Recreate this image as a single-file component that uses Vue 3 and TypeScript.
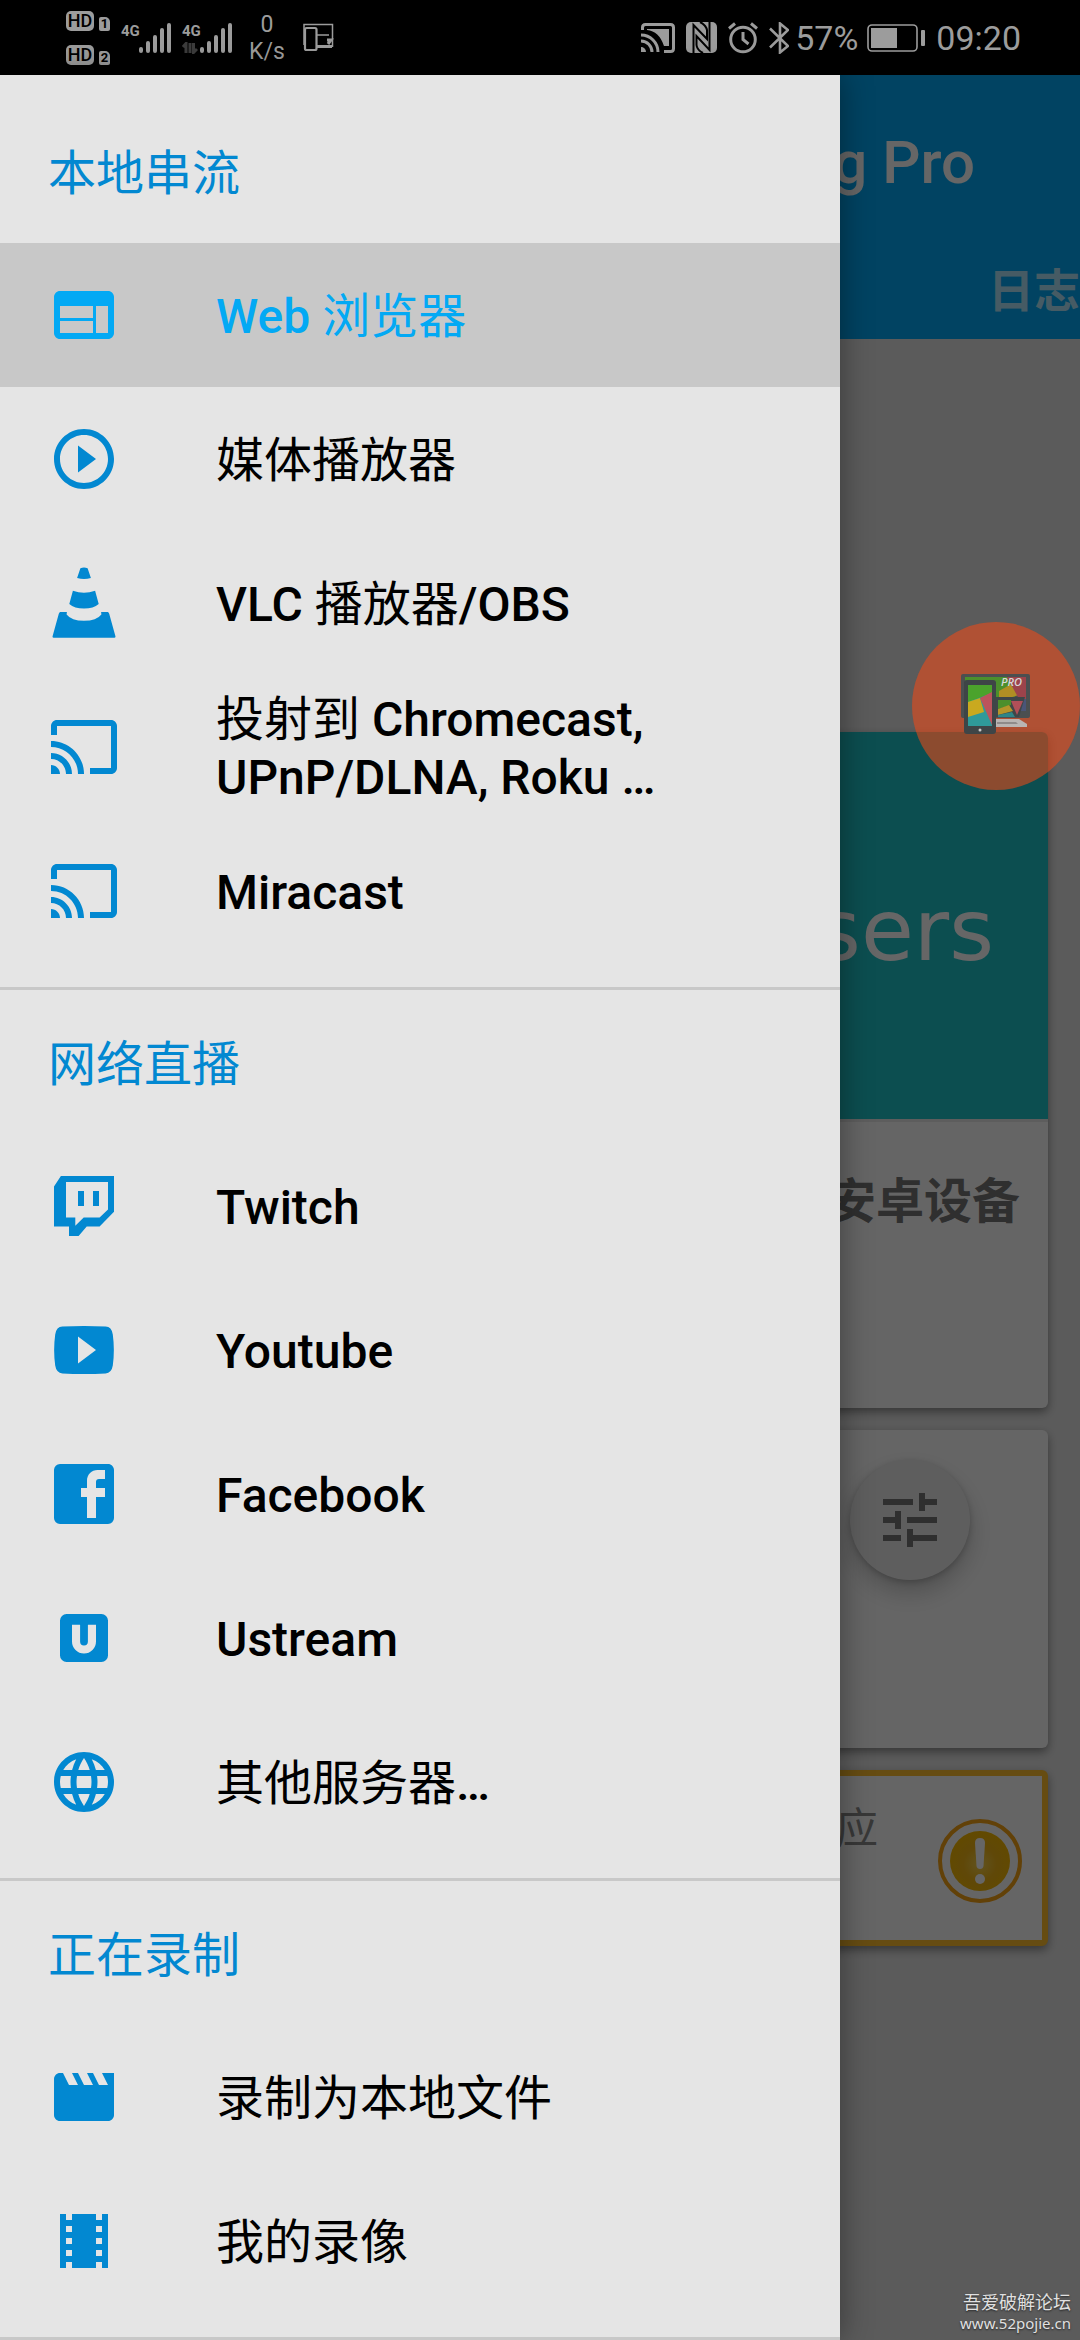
<script setup lang="ts">
import { ref } from 'vue'

interface Entry {
  id: string
  label: string
  icon: string
}

interface Section {
  title: string
  entries: Entry[]
}

interface Run {
  text: string
  latin: boolean
}

const castIcon =
  'M21 3H3c-1.1 0-2 .9-2 2v3h2V5h18v14h-7v2h7c1.1 0 2-.9 2-2V5c0-1.1-.9-2-2-2zM1 18v3h3c0-1.66-1.34-3-3-3zm0-4v2c2.76 0 5 2.24 5 5h2c0-3.87-3.13-7-7-7zm0-4v2c4.97 0 9 4.03 9 9h2c0-6.08-4.93-11-11-11z'

const sections: Section[] = [
  {
    title: '本地串流',
    entries: [
      {
        id: 'web',
        label: 'Web 浏览器',
        icon: 'M20 4H4c-1.1 0-1.99.9-1.99 2L2 18c0 1.1.9 2 2 2h16c1.1 0 2-.9 2-2V6c0-1.1-.9-2-2-2zm-5 14H4v-4h11v4zm0-5H4V9h11v4zm5 5h-4V9h4v9z',
      },
      {
        id: 'player',
        label: '媒体播放器',
        icon: 'M10 16.5l6-4.5-6-4.5v9zM12 2C6.48 2 2 6.48 2 12s4.48 10 10 10 10-4.48 10-10S17.52 2 12 2zm0 18c-4.41 0-8-3.59-8-8s3.59-8 8-8 8 3.59 8 8-3.59 8-8 8z',
      },
      {
        id: 'vlc',
        label: 'VLC 播放器/OBS',
        icon: 'M10.8.4Q12-.1 13.2.4L14.3 3.7Q12 4.3 9.7 3.7zM8.3 7.9Q12 9.2 15.7 7.9L16.9 12.3Q15.2 13.8 12 13.8T7.1 12.3zM4.1 15H6.3L6.2 15.8Q7.8 17.9 12 17.9T17.8 15.8L17.7 15H19.9Q20.2 15 20.4 15.6L22.5 23.2Q22.5 23.6 22.1 23.6H1.9Q1.5 23.6 1.5 23.2L3.6 15.6Q3.8 15 4.1 15z',
      },
      { id: 'chromecast', label: '投射到 Chromecast, UPnP/DLNA, Roku …', icon: castIcon },
      { id: 'miracast', label: 'Miracast', icon: castIcon },
    ],
  },
  {
    title: '网络直播',
    entries: [
      {
        id: 'twitch',
        label: 'Twitch',
        icon: 'M4.3 2H22V13.9L17.2 18.8H12.9L10.2 22H7V18.8H2V5.5zM6 4V15.8H9.1V18.6L11.9 15.8H17.2L20 13.2V4zM10 7H12V12H10zM15 7H17V12H15z',
      },
      {
        id: 'youtube',
        label: 'Youtube',
        icon: 'M4.8 4.2Q12 3.8 19.2 4.2Q21.2 4.3 21.6 6.8Q22.3 12 21.6 17.2Q21.2 19.7 19.2 19.8Q12 20.2 4.8 19.8Q2.8 19.7 2.4 17.2Q1.7 12 2.4 6.8Q2.8 4.3 4.8 4.2zM10 7.5V16.5L16 12z',
      },
      {
        id: 'facebook',
        label: 'Facebook',
        icon: 'M19 4V7H17A1 1 0 0 0 16 8V10H19V13H16V20H13V13H11V10H13V7.5C13 5.56 14.57 4 16.5 4M20 2H4A2 2 0 0 0 2 4V20A2 2 0 0 0 4 22H20A2 2 0 0 0 22 20V4C22 2.89 21.1 2 20 2Z',
      },
      {
        id: 'ustream',
        label: 'Ustream',
        icon: 'M6.2 4h11.6a2.2 2.2 0 0 1 2.2 2.2v11.6a2.2 2.2 0 0 1-2.2 2.2H6.2A2.2 2.2 0 0 1 4 17.8V6.2A2.2 2.2 0 0 1 6.2 4zM8 7.6h2.7v5.6a1.3 1.3 0 0 0 2.6 0V7.6H16v5.6a4 4 0 0 1-8 0z',
      },
      {
        id: 'other',
        label: '其他服务器…',
        icon: 'M11.99 2C6.47 2 2 6.48 2 12s4.47 10 9.99 10C17.52 22 22 17.52 22 12S17.52 2 11.99 2zm6.93 6h-2.95c-.32-1.25-.78-2.45-1.38-3.56 1.84.63 3.37 1.91 4.33 3.56zM12 4.04c.83 1.2 1.48 2.53 1.91 3.96h-3.82c.43-1.43 1.08-2.76 1.91-3.96zM4.26 14C4.1 13.36 4 12.69 4 12s.1-1.36.26-2h3.38c-.08.66-.14 1.32-.14 2 0 .68.06 1.34.14 2H4.26zm.82 2h2.95c.32 1.25.78 2.45 1.38 3.56-1.84-.63-3.37-1.9-4.33-3.56zm2.95-8H5.08c.96-1.66 2.49-2.93 4.33-3.56C8.81 5.55 8.35 6.75 8.03 8zM12 19.96c-.83-1.2-1.48-2.53-1.91-3.96h3.82c-.43 1.43-1.08 2.76-1.91 3.96zM14.34 14H9.66c-.09-.66-.16-1.32-.16-2 0-.68.07-1.35.16-2h4.68c.09.65.16 1.32.16 2 0 .68-.07 1.34-.16 2zm.25 5.56c.6-1.11 1.06-2.31 1.38-3.56h2.95c-.96 1.65-2.49 2.93-4.33 3.56zM16.36 14c.08-.66.14-1.32.14-2 0-.68-.06-1.34-.14-2h3.38c.16.64.26 1.31.26 2s-.1 1.36-.26 2h-3.38z',
      },
    ],
  },
  {
    title: '正在录制',
    entries: [
      {
        id: 'record',
        label: '录制为本地文件',
        icon: 'M18 4l2 4h-3l-2-4h-2l2 4h-3l-2-4H8l2 4H7L5 4H4c-1.1 0-1.99.9-1.99 2L2 18c0 1.1.9 2 2 2h16c1.1 0 2-.9 2-2V4h-4z',
      },
      {
        id: 'recordings',
        label: '我的录像',
        icon: 'M18 3v2h-2V3H8v2H6V3H4v18h2v-2h2v2h8v-2h2v2h2V3h-2zM8 17H6v-2h2v2zm0-4H6v-2h2v2zm0-4H6V7h2v2zm10 8h-2v-2h2v2zm0-4h-2v-2h2v2zm0-4h-2V7h2v2z',
      },
    ],
  },
]

// Latin words are set in medium weight, Chinese runs in regular.
function runs(label: string): Run[] {
  const parts = label.match(/[\u4e00-\u9fff]+\s*|[^\u4e00-\u9fff\s]+\s*/g) ?? []
  return parts.map((text) => ({ text, latin: !/[\u4e00-\u9fff]/.test(text) }))
}

const selected = ref('web')
</script>

<template>
  <div class="screen">
    <header class="status">
      <div class="status-group">
        <div class="sims">
          <div v-for="n in 2" :key="n" class="sim">
            <span class="hd">HD</span>
            <span class="slot">{{ n }}</span>
          </div>
        </div>
        <div class="network">
          <span class="gen">4G</span>
          <svg class="bars" viewBox="0 0 32 30">
            <path d="M2 26v2M9 20v8M16 14v14M23 7v21M30 2v26" />
          </svg>
        </div>
        <div class="network">
          <div class="gen-stack">
            <span class="gen">4G</span>
            <svg class="updown" viewBox="0 0 16 12">
              <path d="M1 5L4 1.500V11M8 1V11M11.500 1V10.500L15 7" />
            </svg>
          </div>
          <svg class="bars" viewBox="0 0 32 30">
            <path d="M2 26v2M9 20v8M16 14v14M23 7v21M30 2v26" />
          </svg>
        </div>
        <div class="speed"><span>0</span><span>K/s</span></div>
        <svg class="split" viewBox="0 0 32 30" fill="none" stroke="#9c9c9c">
          <path d="M2 22V1.500H30.500V24M15 12H27" stroke-width="1.500" />
          <rect x="3" y="5" width="11.500" height="22" rx="1.500" stroke-width="2.200" />
          <path d="M15 23.500H30M25 17l4 0-3 4" stroke-width="3" />
        </svg>
      </div>
      <div class="status-group">
        <svg class="s-cast" viewBox="0 0 34 30">
          <path d="M1.500 7V4.500Q1.500 1.500 4.500 1.500H29.500Q32.500 1.500 32.500 4.500V25.500Q32.500 28.500 29.500 28.500H23" fill="none" stroke="#9c9c9c" stroke-width="3" />
          <path d="M6 7Q18 8 23 23H28V6H6z" fill="#9c9c9c" />
          <path d="M0 12A17 17 0 0 1 17 29M0 18A11 11 0 0 1 11 29" fill="none" stroke="#9c9c9c" stroke-width="3" />
          <path d="M0 24A5 5 0 0 1 5 29H0z" fill="#9c9c9c" />
        </svg>
        <svg class="s-nfc" viewBox="0 0 31 31">
          <rect width="31" height="31" rx="5" fill="#9c9c9c" />
          <path d="M7.500 31V3L21 17V8Q20 3 14 0" fill="none" stroke="#000" stroke-width="2" />
          <path d="M23.500 0V28L10.500 14V23Q11 28 17 31" fill="none" stroke="#000" stroke-width="2" />
        </svg>
        <svg class="s-alarm" viewBox="0 0 30 32" fill="none" stroke="#9c9c9c">
          <circle cx="15" cy="17.500" r="12.300" stroke-width="3" />
          <path d="M1 6.500L7 1.500M29 6.500L23 1.500M15 10V17.500L20.500 22" stroke-width="3" />
        </svg>
        <svg class="s-bt" viewBox="0 0 20 32" fill="none" stroke="#9c9c9c">
          <path d="M1 6.500L19 24L11 30.500V1.500L19 8L1 25.500" stroke-width="2.600" />
        </svg>
        <span class="status-text percent">57%</span>
        <svg class="s-battery" viewBox="0 0 58 28">
          <rect x="1" y="1" width="49" height="26" rx="4" fill="none" stroke="#9c9c9c" stroke-width="1.600" />
          <rect x="4" y="4" width="26" height="20" fill="#9c9c9c" />
          <rect x="54" y="6" width="4" height="16" rx="1" fill="#9c9c9c" />
        </svg>
        <span class="status-text">09:20</span>
      </div>
    </header>

    <div class="stage">
      <main class="page">
        <div class="appbar">
          <h1 class="app-title">g Pro</h1>
          <div class="tab">日志</div>
        </div>
        <div class="cards">
          <section class="card device">
            <div class="banner">sers</div>
            <h2 class="device-title">安卓设备</h2>
          </section>
          <section class="card options">
            <button class="fab" type="button" aria-label="Settings">
              <svg viewBox="0 0 24 24"><path d="M3 17v2h6v-2H3zM3 5v2h10V5H3zm10 16v-2h8v-2h-8v-2h-2v6h2zM7 9v2H3v2h4v2h2V9H7zm14 4v-2H11v2h10zm-6-4h2V7h4V5h-4V3h-2v6z" /></svg>
            </button>
          </section>
          <section class="card notice">
            <span class="notice-text">应</span>
            <svg class="warning" viewBox="0 0 84 84">
              <defs>
                <radialGradient id="amber" cx=".5" cy=".55" r=".55">
                  <stop offset="0" stop-color="#f5d050" />
                  <stop offset=".5" stop-color="#efb416" />
                  <stop offset="1" stop-color="#f5b800" />
                </radialGradient>
              </defs>
              <circle cx="42" cy="42" r="40" fill="none" stroke="#f5a214" stroke-width="4" />
              <circle cx="42" cy="42" r="30" fill="url(#amber)" />
              <path d="M37 24Q37 19 42 19T47 24L45.500 47Q45 50 42 50T38.500 47z" fill="#fff" />
              <circle cx="42" cy="60" r="5" fill="#fff" />
            </svg>
          </section>
        </div>
      </main>

      <div class="scrim"></div>

      <nav class="drawer">
        <section v-for="s in sections" :key="s.title" class="group">
          <h2 class="group-title">{{ s.title }}</h2>
          <a
            v-for="e in s.entries"
            :key="e.id"
            class="entry"
            :class="{ active: selected === e.id }"
            href="#"
            @click.prevent="selected = e.id"
          >
            <svg class="entry-icon" viewBox="0 0 24 24"><path :d="e.icon" fill-rule="evenodd" /></svg>
            <span class="entry-label"><span v-for="(r, i) in runs(e.label)" :key="i" :class="{ latin: r.latin }">{{ r.text }}</span></span>
          </a>
        </section>
      </nav>

      <button class="bubble" type="button" aria-label="Screen mirroring">
        <svg viewBox="0 0 70 66">
          <rect x="0" y="1" width="69" height="44" rx="2" fill="#4b4f50" />
          <path d="M4 4H46L54 24 34 30H4z" fill="#4c8f2c" />
          <path d="M38 18L52 10 58 22 38 28z" fill="#b08e24" />
          <path d="M46 4H65V26H58z" fill="#9c434b" />
          <path d="M56 26H65V38H56z" fill="#4a5578" />
          <path d="M34 24H64L58 44H34z" fill="#3f4648" />
          <path d="M37 27H50L50 32 37 36z" fill="#4c8f2c" />
          <path d="M37 36L48 32 52 38 37 42z" fill="#b4952a" />
          <path d="M50 28H62L56 42z" fill="#b04f58" />
          <path d="M37 42L51 39 54 44H37z" fill="#2f8587" />
          <path d="M35 46H58L66 51V54H35z" fill="#b9b5b3" />
          <path d="M36 49H55L57 51H36z" fill="#8f8b8a" />
          <rect x="3" y="7" width="32" height="54" rx="3" fill="#3e4547" />
          <rect x="7" y="12" width="24" height="41" fill="#2f9a9a" />
          <path d="M7 12H31V20L7 29z" fill="#4ba32c" />
          <path d="M7 29L19 25 23 39 7 44z" fill="#c9a91f" />
          <path d="M19 25L31 19V52z" fill="#bc545c" />
          <circle cx="19" cy="57" r="1.500" fill="#c8c8c8" />
          <text x="40" y="13" class="pro">PRO</text>
        </svg>
      </button>

      <div class="watermark">
        <span>吾爱破解论坛</span>
        <span class="site">www.52pojie.cn</span>
      </div>
    </div>
  </div>
</template>

<style>
body {
  margin: 0;
  background: #000;
}
</style>

<style scoped>
.screen {
  display: flex;
  flex-direction: column;
  min-height: 100vh;
  font-family: Roboto, 'Noto Sans CJK SC', sans-serif;
  overflow: hidden;
}

h1,
h2 {
  margin: 0;
}

svg {
  display: block;
  flex: none;
}

/* Status bar */
.status {
  display: flex;
  justify-content: space-between;
  align-items: center;
  height: 75px;
  padding: 0 59px 0 66px;
  box-sizing: border-box;
  background: #000;
  color: #9c9c9c;
}

.status-group {
  display: flex;
  align-items: center;
  gap: 11px;
}

.sims {
  display: flex;
  flex-direction: column;
  gap: 14px;
}

.sim {
  display: flex;
  align-items: flex-end;
  gap: 5px;
  height: 20px;
}

.hd,
.slot {
  background: #9c9c9c;
  color: #000;
  text-align: center;
}

.hd {
  width: 28px;
  border-radius: 5px;
  font-size: 18px;
  line-height: 20px;
  font-weight: 500;
}

.slot {
  width: 11px;
  border-radius: 2px 5px 2px 2px;
  font-size: 13px;
  line-height: 14px;
  font-weight: 700;
}

.network {
  display: flex;
  align-items: flex-start;
  height: 30px;
}

.gen {
  width: 18px;
  font-size: 15px;
  line-height: 16px;
  font-weight: 700;
}

.gen-stack {
  display: flex;
  flex-direction: column;
  gap: 3px;
}

.updown {
  width: 16px;
  height: 12px;
  fill: none;
  stroke: #3c3c3c;
  stroke-width: 3;
}

.bars {
  width: 32px;
  height: 30px;
  fill: none;
  stroke: #9c9c9c;
  stroke-width: 4;
  stroke-linecap: round;
}

.speed {
  display: flex;
  flex-direction: column;
  align-items: center;
  width: 48px;
  font-size: 23px;
  line-height: 27px;
}

.split {
  width: 32px;
  height: 30px;
}

.s-cast {
  width: 34px;
  height: 30px;
}

.s-nfc {
  width: 31px;
  height: 31px;
}

.s-alarm {
  width: 30px;
  height: 32px;
}

.s-bt {
  width: 20px;
  height: 32px;
}

.s-battery {
  width: 58px;
  height: 28px;
}

.status-text {
  font-size: 34px;
  line-height: 40px;
}

.percent {
  margin: 0 -2px 0 -5px;
}

/* Page, scrim and drawer share one grid cell */
.stage {
  position: relative;
  display: grid;
  flex: 1;
}

.page,
.scrim,
.drawer {
  grid-area: 1 / 1;
}

.page {
  background: #e4e4e4;
  min-width: 0;
}

.scrim {
  z-index: 1;
  background: rgba(0, 0, 0, 0.6);
}

.appbar {
  display: flex;
  flex-direction: column;
  align-items: flex-end;
  height: 264px;
  padding-top: 4px;
  box-sizing: border-box;
  background: #03a9f4;
}

.app-title {
  padding-right: 105px;
  color: #fff;
  font-size: 60px;
  line-height: 168px;
  font-weight: 500;
}

.tab {
  color: rgba(255, 255, 255, 0.7);
  font-size: 46px;
  line-height: 88px;
  font-weight: 700;
}

.cards {
  display: flex;
  flex-direction: column;
  gap: 22px;
  padding: 393px 32px 0;
}

.card {
  box-sizing: border-box;
  border-radius: 6px;
  background: #fdfdfd;
  box-shadow: 0 4px 10px rgba(0, 0, 0, 0.4);
  overflow: hidden;
}

.device {
  height: 676px;
}

.banner {
  height: 387px;
  padding: 0 54px;
  background: #1ec2c8;
  border-bottom: 3px solid #e8e8e8;
  color: #fff;
  font-family: 'DejaVu Sans', sans-serif;
  font-size: 86px;
  line-height: 396px;
  text-align: right;
}

.device-title {
  padding: 56px 28px 0;
  color: #757575;
  font-size: 48px;
  line-height: 48px;
  font-weight: 700;
  text-align: right;
}

.options {
  display: flex;
  justify-content: flex-end;
  height: 318px;
  padding: 30px 78px;
}

.fab {
  display: flex;
  align-items: center;
  justify-content: center;
  width: 120px;
  height: 120px;
  padding: 0;
  border: 0;
  border-radius: 50%;
  background: #ececec;
  box-shadow: 0 12px 24px rgba(0, 0, 0, 0.22), 0 2px 6px rgba(0, 0, 0, 0.2);
}

.fab svg {
  width: 72px;
  height: 72px;
  fill: #757575;
}

.notice {
  display: flex;
  justify-content: flex-end;
  align-items: flex-start;
  gap: 60px;
  height: 176px;
  padding: 32px 20px;
  border: 6px solid #ffbe2e;
}

.notice-text {
  color: #8c8c8c;
  font-size: 42px;
  line-height: 42px;
}

.warning {
  width: 84px;
  height: 84px;
  margin-top: 11px;
}

.drawer {
  z-index: 2;
  width: 78%;
  max-width: 840px;
  padding-top: 24px;
  box-sizing: border-box;
  background: #e5e5e5;
  box-shadow: 0 0 30px rgba(0, 0, 0, 0.4);
}

.group {
  padding-bottom: 24px;
  border-bottom: 3px solid #c8c8c8;
}

.group-title {
  padding: 6px 48px 0;
  color: #0288d1;
  font-size: 48px;
  line-height: 138px;
  font-weight: 400;
}

.entry {
  display: flex;
  align-items: center;
  gap: 96px;
  min-height: 144px;
  padding: 0 48px;
  box-sizing: border-box;
  color: #000;
  text-decoration: none;
}

.entry-icon {
  width: 72px;
  height: 72px;
  fill: #0288d1;
}

.entry-label {
  padding-top: 4px;
  font-size: 48px;
  line-height: 58px;
  font-weight: 400;
}

.latin {
  font-weight: 500;
}

.entry.active {
  background: #c8c8c8;
  color: #03a9f4;
}

.entry.active .entry-icon {
  fill: #03a9f4;
}

/* Floating launcher over the page */
.bubble {
  position: absolute;
  z-index: 3;
  top: 547px;
  right: 0;
  display: flex;
  align-items: center;
  justify-content: center;
  width: 168px;
  height: 168px;
  padding: 0;
  border: 0;
  border-radius: 50%;
  background: rgba(245, 73, 20, 0.55);
}

.bubble svg {
  width: 70px;
  height: 66px;
}

.pro {
  fill: #d8d8d8;
  font-family: 'Open Sans', sans-serif;
  font-size: 11px;
  font-style: italic;
  font-weight: 600;
}

.watermark {
  position: absolute;
  z-index: 3;
  right: 9px;
  bottom: 7px;
  display: flex;
  flex-direction: column;
  align-items: flex-end;
  color: #e0e0e0;
  font-size: 18px;
  line-height: 20px;
  text-shadow: 0 1px 2px rgba(0, 0, 0, 0.6);
}

.site {
  font-family: 'Noto Sans', sans-serif;
  font-size: 15px;
}
</style>
